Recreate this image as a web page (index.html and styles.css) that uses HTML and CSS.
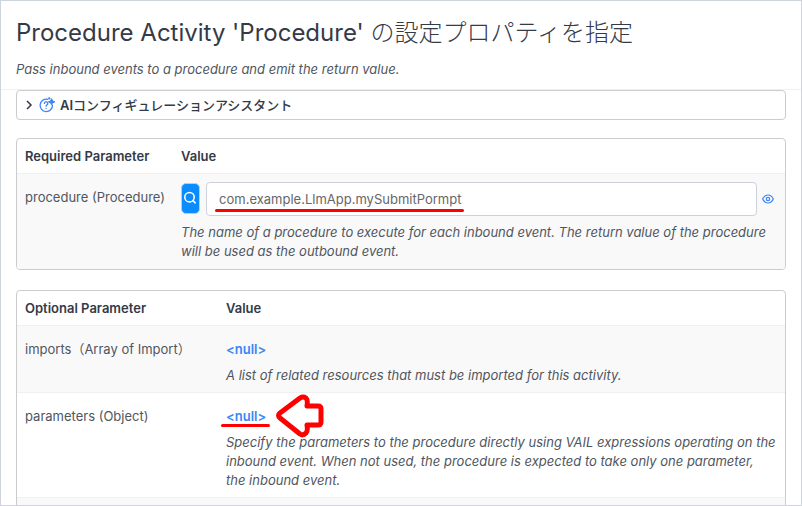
FILE: index.html
```html
<!DOCTYPE html>
<html lang="ja">
<head>
<meta charset="utf-8">
<title>Procedure Activity</title>
<link rel="stylesheet" href="styles.css">
</head>
<body>
<main class="panel">
  <header class="panel-header">
    <h1>Procedure Activity 'Procedure' <span class="title-ja">の設定プロパティを指定</span></h1>
    <p class="subtitle">Pass inbound events to a procedure and emit the return value.</p>
  </header>
  <div class="panel-body">
    <button type="button" class="assistant" aria-expanded="false">
      <svg class="chevron" width="8" height="10" viewBox="0 0 8 10" fill="none" stroke="currentColor" stroke-width="1.5"><path d="M2 1l4 4-4 4"/></svg>
      <svg class="ai-icon" width="16" height="16" viewBox="0 0 16 16" fill="none" stroke="currentColor" stroke-width="1.3" stroke-linecap="round" stroke-linejoin="round">
        <path d="M8.6 2.3A6.2 6.2 0 1 0 13.5 8.2"/>
        <path d="M5.4 6.4a1.7 1.7 0 1 1 2.6 1.5c-.7.4-.9.7-.9 1.3"/>
        <path d="M7.1 11.3v.1"/>
        <path d="M12.600 2l.9 2 2 .8-2 .8-.9 2-.9-2-2-.8 2-.8z" fill="currentColor"/>
        <path d="M10.200 .4v1.800M9.300 1.300h1.800" stroke-width="1"/>
      </svg>
      <span>AI<span class="assistant-ja">コンフィギュレーションアシスタント</span></span>
    </button>

    <div class="card">
      <table>
        <thead>
          <tr><th scope="col">Required Parameter</th><th scope="col" class="value">Value</th></tr>
        </thead>
        <tbody>
          <tr>
            <td class="name"><label for="procedure">procedure (Procedure)</label></td>
            <td>
              <div class="field">
                <button type="button" class="search" aria-label="Search">
                  <svg width="14" height="14" viewBox="0 0 14 14" fill="none" stroke="currentColor" stroke-width="1.6" stroke-linecap="round"><circle cx="6.5" cy="6.2" r="4.700"/><path d="M9.900 9.600l2.300 2.200"/></svg>
                </button>
                <div class="input-wrap">
                  <input id="procedure" type="text" value="com.example.LlmApp.mySubmitPormpt">
                  <span class="mark mark-input"></span>
                </div>
                <button type="button" class="eye" aria-label="View">
                  <svg width="12" height="10" viewBox="0 0 12 10" fill="none" stroke="currentColor" stroke-width="1.2"><path d="M.7 5C2 2.300 3.800 1 6 1s4 1.300 5.300 4C10 7.700 8.200 9 6 9S2 7.700.7 5z"/><circle cx="6" cy="5" r="1.700"/></svg>
                </button>
              </div>
              <p class="help">The name of a procedure to execute for each inbound event. The return value of the procedure will be used as the outbound event.</p>
            </td>
          </tr>
        </tbody>
      </table>
    </div>

    <div class="card">
      <table class="optional">
        <thead>
          <tr><th scope="col">Optional Parameter</th><th scope="col" class="value">Value</th></tr>
        </thead>
        <tbody>
          <tr>
            <td class="name">imports（Array of Import）</td>
            <td>
              <a class="null" href="#imports">&lt;null&gt;</a>
              <p class="help">A list of related resources that must be imported for this activity.</p>
            </td>
          </tr>
          <tr>
            <td class="name">parameters (Object)</td>
            <td>
              <a class="null" href="#parameters">&lt;null&gt;<span class="mark mark-null"></span>
                <svg class="arrow" width="50" height="46" viewBox="0 0 50 46" fill="#fff" stroke="#f00" stroke-width="5" stroke-linejoin="round"><path d="M5 20L25 5Q28 3 31 5Q33 7 32 13H43Q46 13 46 16V29Q46 32 43 32H32Q33 38 31 40Q28 43 25 41L5 25Q2 22.500 5 20z"/></svg>
              </a>
              <p class="help">Specify the parameters to the procedure directly using VAIL expressions operating on the inbound event. When not used, the procedure is expected to take only one parameter, the inbound event.</p>
            </td>
          </tr>
          <tr><td class="name"></td><td></td></tr>
        </tbody>
      </table>
    </div>
  </div>
</main>
</body>
</html>
```
FILE: styles.css
```css
* { box-sizing: border-box; }

body {
  margin: 0;
  font: 13px/19px Inter, "Noto Sans CJK JP", sans-serif;
  color: #505660;
  background: #fff;
}

.panel {
  height: 100vh;
  overflow: hidden;
  border: 1px solid #cdd4de;
}

.panel-header {
  padding: 16px 15px 10px;
  border-bottom: 1px solid #f0f0f0;
}

h1 {
  margin: 0 0 12px;
  font-size: 24px;
  line-height: 31px;
  font-weight: 400;
  color: #343a46;
}

.title-ja { font-weight: 300; }

p { margin: 0; }

.subtitle, .help { font-style: italic; }

.panel-body { padding: 0 15px; }

.assistant {
  display: flex;
  align-items: center;
  width: 100%;
  height: 30px;
  padding: 0 8px;
  border: 1px solid #ccc;
  border-radius: 4px;
  background: #fff;
  color: #343a46;
  font: 600 13px/19px Inter, "Noto Sans CJK JP", sans-serif;
}

.assistant-ja { font-weight: 500; }

.chevron { margin-right: 6px; }
.ai-icon { margin-right: 5px; color: #3b86f7; }

.card {
  margin: 18px 0 20px;
  border: 1px solid #ccc;
  border-radius: 4px;
  overflow: hidden;
}

table {
  width: 100%;
  border-collapse: collapse;
}

th {
  height: 34px;
  padding: 2px 8px 0;
  text-align: left;
  font-weight: 600;
  color: #343a46;
}

th:first-child { width: 154px; }
.optional th { height: 35px; }
.optional th:first-child { width: 201px; }

td {
  padding: 8px;
  border-top: 1px solid #f0f0f0;
  vertical-align: top;
}

tbody tr:nth-child(odd) { background: #f9f9f9; }

.name {
  padding-top: 14px;
  white-space: nowrap;
}

.optional td { padding: 14px 9px 7px 8px; }

.field {
  display: flex;
  align-items: center;
  margin-bottom: 7px;
}

button { cursor: pointer; }

.search {
  display: flex;
  align-items: center;
  justify-content: center;
  width: 19px;
  height: 31px;
  margin-right: 6px;
  padding: 0 1px 2px 0;
  border: 1px solid #b9cde4;
  border-radius: 5px;
  background: #0a8cff;
  color: #fff;
}

.search svg { flex: none; }

.input-wrap {
  position: relative;
  flex: 1;
}

input {
  display: block;
  width: 100%;
  height: 34px;
  padding: 0 12px;
  border: 1px solid #ced0dc;
  border-radius: 4px;
  background: #fff;
  color: #666;
  font: inherit;
}

.eye {
  display: flex;
  margin: 0 3px 0 5px;
  padding: 0;
  border: 0;
  background: none;
  color: #3b86f7;
}

.null {
  position: relative;
  display: inline-block;
  margin-bottom: 7px;
  color: #3b86f7;
  font-weight: 600;
  text-decoration: none;
}

.mark {
  position: absolute;
  height: 3px;
  border-radius: 2px;
  background: #f00;
}

.mark-input { left: 9px; bottom: 4px; width: 249px; }
.mark-null { left: -5px; right: -4px; bottom: -1px; }

.arrow {
  position: absolute;
  left: 49px;
  top: -14px;
}
```
